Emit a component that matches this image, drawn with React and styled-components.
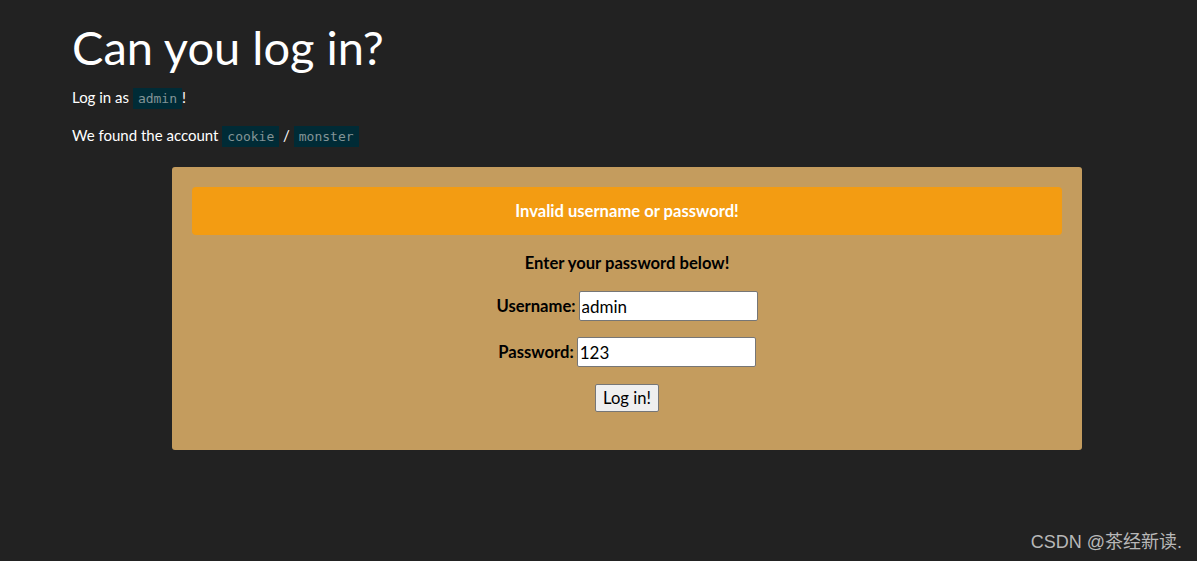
import React, { useState } from "react";
import styled, { createGlobalStyle } from "styled-components";

const GlobalStyle = createGlobalStyle`
  html, body {
    margin: 0;
    background: #222222;
    font-family: Lato, "Liberation Sans", sans-serif;
    color: #ffffff;
  }
`;

const Page = styled.div`
  min-height: 561px;
  padding: 0 15px 0 72px;
  box-sizing: border-box;
  position: relative;
`;

const Title = styled.h1`
  margin: 0;
  padding-top: 17px;
  font-size: 47px;
  font-weight: 400;
  line-height: 60px;
`;

const Para = styled.p`
  margin: ${(p) => p.$top || 0}px 0 ${(p) => p.$gap || 0}px;
  font-size: 15px;
  line-height: 24px;
`;

const Code = styled.code`
  font-family: "DejaVu Sans Mono", "Liberation Mono", monospace;
  font-size: 13px;
  background: #002b36;
  color: #839496;
  padding: 3px 5px;
`;

const Card = styled.div`
  width: 910px;
  margin: 18px auto 0;
  background: #c49c5e;
  border-radius: 3px;
  padding: 20px 20px 38px;
  box-sizing: border-box;
  color: #000;
  text-align: center;
`;

const Alert = styled.div`
  background: #f39c12;
  border-radius: 4px;
  color: #fff;
  font-weight: 700;
  font-size: 16.6px;
  height: 48px;
  display: flex;
  align-items: center;
  justify-content: center;
`;

const Prompt = styled.div`
  margin-top: 18px;
  font-size: 16.6px;
  font-weight: 700;
  line-height: 20px;
`;

const Row = styled.div`
  display: flex;
  justify-content: center;
  align-items: center;
  gap: 3px;
  margin-top: ${(p) => p.$top}px;
`;

const Label = styled.label`
  font-size: 16.6px;
  font-weight: 700;
`;

const Input = styled.input`
  width: 179px;
  height: 30px;
  box-sizing: border-box;
  border: 1px solid #767676;
  border-radius: 2px;
  padding: 1px 2px;
  font-family: Lato, "Liberation Sans", sans-serif;
  font-size: 17px;
  color: #000;
  background: #fff;
`;

const Button = styled.button`
  height: 28px;
  padding: 1px 7px;
  font-family: Lato, "Liberation Sans", sans-serif;
  font-size: 16.6px;
  color: #000;
  background: #efefef;
  border: 1px solid #767676;
  border-radius: 2px;
`;

const Watermark = styled.div`
  position: absolute;
  right: 15px;
  top: 527px;
  font-family: "Liberation Sans", "Noto Sans CJK SC", sans-serif;
  font-size: 18px;
  color: #b8b8b8;
`;

export default function App() {
  const [user, setUser] = useState("admin");
  const [pass, setPass] = useState("123");

  return (
    <Page>
      <GlobalStyle />
      <Title>Can you log in?</Title>
      <Para $top={8} $gap={12}>
        Log in as <Code>admin</Code>!
      </Para>
      <Para>
        We found the account <Code>cookie</Code> / <Code>monster</Code>
      </Para>
      <Card>
        <Alert>Invalid username or password!</Alert>
        <Prompt>Enter your password below!</Prompt>
        <Row $top={18}>
          <Label htmlFor="username">Username:</Label>
          <Input id="username" value={user} onChange={(e) => setUser(e.target.value)} />
        </Row>
        <Row $top={16}>
          <Label htmlFor="password">Password:</Label>
          <Input id="password" value={pass} onChange={(e) => setPass(e.target.value)} />
        </Row>
        <Row $top={17}>
          <Button>Log in!</Button>
        </Row>
      </Card>
      <Watermark>CSDN @茶经新读.</Watermark>
    </Page>
  );
}
